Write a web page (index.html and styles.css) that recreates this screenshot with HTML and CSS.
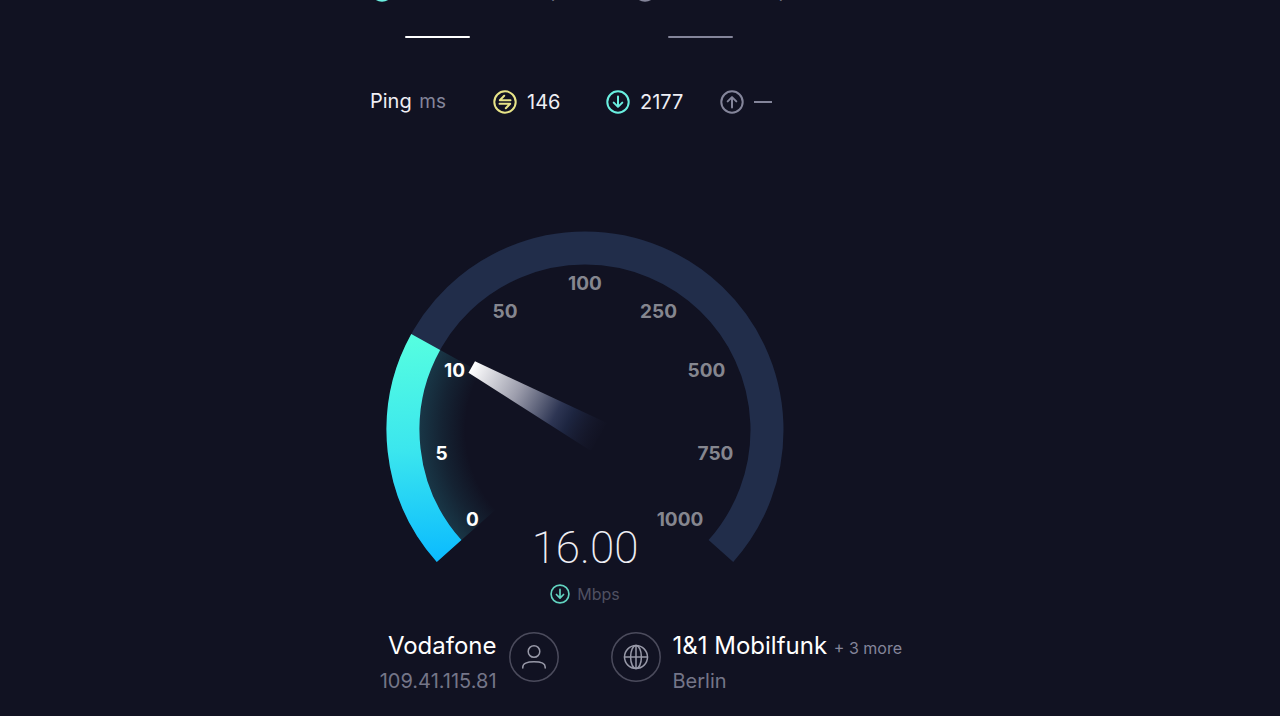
FILE: index.html
```html
<!DOCTYPE html>
<html lang="en">
<head>
    <meta charset="utf-8">
    <title>Speed Test</title>
    <link rel="stylesheet" href="styles.css">
</head>
<body>
    <!-- Shared icons -->
    <svg class="sprite" aria-hidden="true">
        <symbol id="icon-down" viewBox="0 0 24 24">
            <circle cx="12" cy="12" r="10.7"/>
            <path d="M12 6.5v10.3M7.7 12.6l4.3 4.3 4.3-4.3"/>
        </symbol>
        <symbol id="icon-up" viewBox="0 0 24 24">
            <circle cx="12" cy="12" r="10.7"/>
            <path d="M12 17.5V7.2M7.7 11.4L12 7.1l4.3 4.3"/>
        </symbol>
        <symbol id="icon-ping" viewBox="0 0 24 24">
            <circle cx="12" cy="12" r="10.7"/>
            <path d="M17.5 10.2H6.8l4.4-4.4M6.5 13.8h10.7l-4.4 4.4"/>
        </symbol>
    </svg>

    <main class="page">
        <div class="results">
            <section class="metric">
                <h2 class="metric-title">
                    <svg class="icon teal"><use href="#icon-down"/></svg>
                    <span>DOWNLOAD <small>Mbps</small></span>
                </h2>
                <div class="metric-line"></div>
            </section>
            <section class="metric muted">
                <h2 class="metric-title">
                    <svg class="icon"><use href="#icon-up"/></svg>
                    <span>UPLOAD <small>Mbps</small></span>
                </h2>
                <div class="metric-line"></div>
            </section>
        </div>

        <div class="ping">
            <div class="ping-label">Ping <span class="unit">ms</span></div>
            <div class="ping-item"><svg class="icon yellow"><use href="#icon-ping"/></svg>146</div>
            <div class="ping-item"><svg class="icon teal"><use href="#icon-down"/></svg>2177</div>
            <div class="ping-item muted"><svg class="icon"><use href="#icon-up"/></svg><span class="dash"></span></div>
        </div>

        <div class="gauge">
            <svg class="dial" viewBox="0 0 400 374" role="img" aria-label="Download speed gauge">
                <defs>
                    <linearGradient id="progress" gradientUnits="userSpaceOnUse" x1="50" y1="104" x2="65" y2="332">
                        <stop offset="0" stop-color="#56fee0"/>
                        <stop offset="0.5" stop-color="#3be6ee"/>
                        <stop offset="1" stop-color="#0abaff"/>
                    </linearGradient>
                    <radialGradient id="glow" gradientUnits="userSpaceOnUse" cx="200" cy="200" r="166">
                        <stop offset="0.72" stop-color="#34b8c8" stop-opacity="0"/>
                        <stop offset="0.86" stop-color="#34b8c8" stop-opacity="0.1"/>
                        <stop offset="1" stop-color="#34b8c8" stop-opacity="0.22"/>
                    </radialGradient>
                    <linearGradient id="needle" gradientUnits="userSpaceOnUse" x1="87" y1="137" x2="218" y2="206">
                        <stop offset="0" stop-color="#ffffff"/>
                        <stop offset="0.35" stop-color="#9c9dac"/>
                        <stop offset="0.65" stop-color="#2d3553"/>
                        <stop offset="0.75" stop-color="#1d2540"/>
                        <stop offset="1" stop-color="#17192c" stop-opacity="0"/>
                    </linearGradient>
                </defs>
                <path class="track" d="M64.1 321.1A182 182 0 1 1 335.9 321.1"/>
                <path fill="url(#glow)" d="M200 200L76.5 310.1A165.5 165.5 0 0 1 55.1 120Z"/>
                <path class="progress" d="M64.1 321.1A182 182 0 0 1 40.7 112"/>
                <path fill="url(#needle)" d="M83.5 142.7L90 131.3L222 193L206 221Z"/>
                <g class="marks">
                    <text class="passed" x="87.5" y="296">0</text>
                    <text class="passed" x="56.5" y="230">5</text>
                    <text class="passed" x="69.5" y="147">10</text>
                    <text x="120" y="88">50</text>
                    <text x="200" y="60">100</text>
                    <text x="273.5" y="88">250</text>
                    <text x="321.5" y="147">500</text>
                    <text x="330.5" y="230">750</text>
                    <text x="295" y="296">1000</text>
                </g>
            </svg>
            <div class="readout">
                <div class="speed">16.00</div>
                <div class="speed-unit"><svg class="icon-small teal"><use href="#icon-down"/></svg>Mbps</div>
            </div>
        </div>

        <div class="hosts">
            <div class="host host-client">
                <div>
                    <div class="host-name">Vodafone</div>
                    <div class="host-detail">109.41.115.81</div>
                </div>
                <svg class="host-icon" viewBox="0 0 50 50">
                    <circle class="ring" cx="25" cy="25" r="24.2"/>
                    <circle cx="25" cy="19.5" r="5.8"/>
                    <path d="M13.8 36v-1c0-3.4 4-5.2 11.2-5.2s11.2 1.800 11.2 5.200v1"/>
                </svg>
            </div>
            <div class="host">
                <svg class="host-icon" viewBox="0 0 50 50">
                    <circle class="ring" cx="25" cy="25" r="24.2"/>
                    <circle cx="25" cy="25" r="11.5"/>
                    <ellipse cx="25" cy="25" rx="5.4" ry="11.5"/>
                    <path d="M13.5 25h23M25 13.5v23"/>
                </svg>
                <div>
                    <div class="host-name">1&amp;1 Mobilfunk <span class="more">+ 3 more</span></div>
                    <div class="host-detail">Berlin</div>
                </div>
            </div>
        </div>
    </main>
</body>
</html>
```
FILE: styles.css
```css
:root {
    --background: #111222;
    --muted: #84859a;
    --track: #212d4a;
    --teal: #6aefe0;
    --yellow: #e8e488;
}

* {
    box-sizing: border-box;
}

body {
    margin: 0;
    background-color: white;
    color: #eeeef4;
    font-family: Inter, "Open Sans", sans-serif;
    font-size: 20px;
    line-height: 24px;
}

.page {
    display: flex;
    flex-direction: column;
    align-items: center;
    min-height: calc(100vh - 4px);
    padding-right: 110px;
    background-color: var(--background);
    overflow: hidden;
}

.sprite {
    display: none;
}

.icon,
.icon-small,
.host-icon {
    flex: none;
    fill: none;
    stroke: currentColor;
    stroke-width: 2;
    stroke-linecap: round;
    stroke-linejoin: round;
}

.icon {
    width: 24px;
    height: 24px;
}

.icon-small {
    width: 20px;
    height: 20px;
}

.teal {
    color: var(--teal);
}

.yellow {
    color: var(--yellow);
}

.muted,
.unit {
    color: var(--muted);
}

.unit {
    font-size: 19px;
}

/* Download / upload results, scrolled under the top edge */
.results {
    display: grid;
    grid-template-columns: 263px 167px;
    width: 430px;
    margin-top: -22px;
}

.metric-title {
    display: flex;
    align-items: flex-start;
    gap: 10px;
    margin: 0;
    font-size: 19px;
    font-weight: 500;
    line-height: 26px;
    white-space: nowrap;
}

.metric-title small {
    font-size: 19px;
    font-weight: 400;
    color: var(--muted);
}

.metric-line {
    width: 65px;
    height: 2px;
    margin: 32px 0 0 35px;
    border-radius: 1px;
    background-color: white;
}

.muted .metric-line {
    background-color: var(--muted);
}

/* Ping row */
.ping {
    display: grid;
    grid-template-columns: 123px 113px 114px 80px;
    width: 430px;
    margin-top: 51px;
}

.ping-item {
    display: flex;
    align-items: center;
    gap: 10px;
}

.ping-label .unit {
    margin-left: 2px;
}

.dash {
    width: 18px;
    height: 2px;
    background-color: currentColor;
}

/* Gauge */
.gauge {
    display: grid;
    width: 400px;
    margin-top: 116px;
}

.dial,
.readout {
    grid-area: 1 / 1;
}

.dial {
    width: 100%;
}

.track,
.progress {
    fill: none;
    stroke-width: 33;
}

.track {
    stroke: var(--track);
}

.progress {
    stroke: url(#progress);
}

.marks text {
    fill: #85868f;
    font-size: 19px;
    font-weight: 700;
    text-anchor: middle;
}

.marks .passed {
    fill: white;
}

.readout {
    align-self: end;
    text-align: center;
}

.speed {
    font-family: Roboto, sans-serif;
    font-size: 44px;
    font-weight: 200;
    line-height: 52px;
}

.speed-unit {
    display: flex;
    justify-content: center;
    align-items: center;
    gap: 7px;
    margin-top: 10px;
    font-size: 16px;
    line-height: 20px;
    color: #4f5061;
}

.speed-unit .teal {
    color: #62d3c0;
}

/* Provider and server */
.hosts {
    display: grid;
    grid-template-columns: 1fr 1fr;
    gap: 52px;
    width: 634px;
    margin-top: 26px;
}

.host {
    display: flex;
    align-items: flex-start;
    gap: 12px;
    white-space: nowrap;
}

.host-client {
    justify-content: flex-end;
    text-align: right;
}

.host-icon {
    width: 50px;
    height: 50px;
    margin-top: 2px;
    stroke: #9899a8;
    stroke-width: 1.5;
}

.host-icon .ring {
    stroke: #4b4b5c;
}

.host-name {
    font-size: 24px;
    line-height: 32px;
    color: white;
}

.more {
    font-size: 16px;
    line-height: 16px;
    color: var(--muted);
}

.host-detail {
    margin-top: 3px;
    font-size: 20px;
    line-height: 32px;
    color: #747588;
}
```
